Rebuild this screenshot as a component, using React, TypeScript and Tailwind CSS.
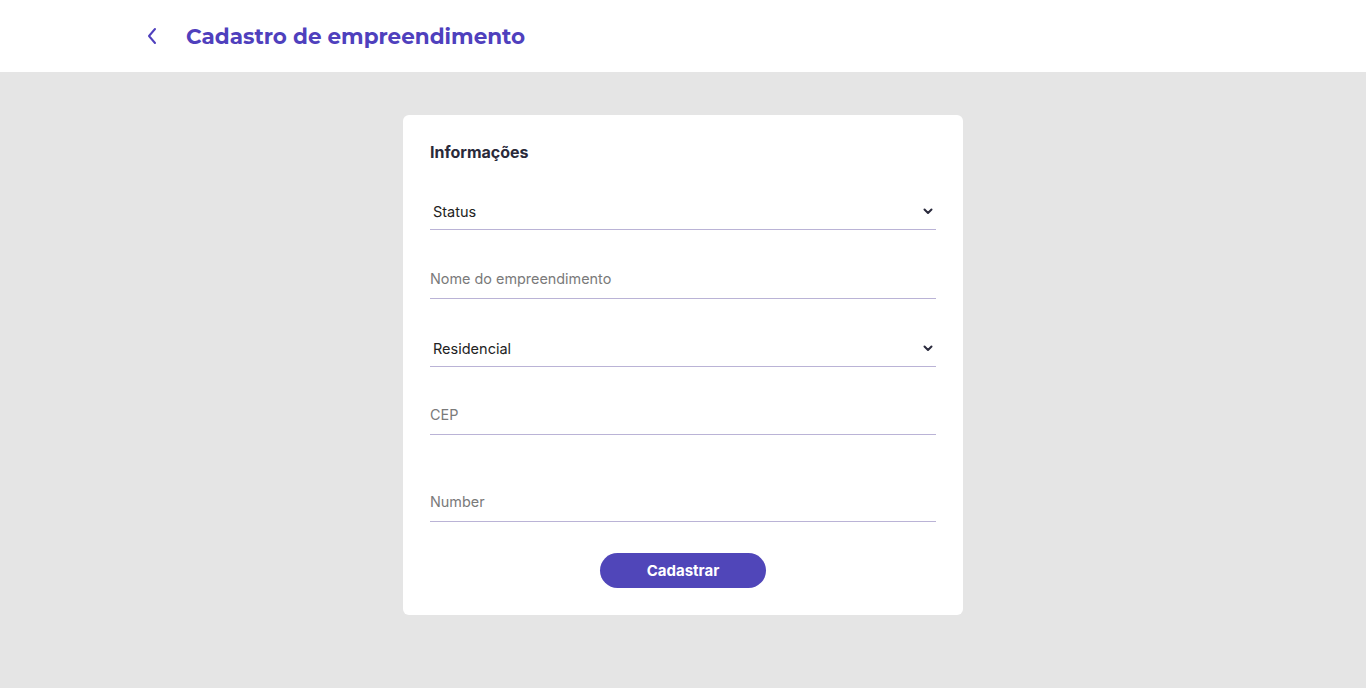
import React from 'react';

const font = { fontFamily: 'Inter, "Noto Sans", sans-serif' };

function Chevron() {
  return (
    <svg width="10" height="7" viewBox="0 0 10 7" className="text-[#2b2b3d]">
      <path d="M1.5 1.5 L5 5 L8.5 1.5" fill="none" stroke="currentColor" strokeWidth="2" strokeLinecap="round" strokeLinejoin="round" />
    </svg>
  );
}

function SelectField({ label }: { label: string }) {
  return (
    <div className="flex h-[37px] items-center justify-between border-b border-[#bab3d6] pt-[1px] pl-[3px] pr-[3px]">
      <span className="text-[14.5px] text-[#222222]">{label}</span>
      <Chevron />
    </div>
  );
}

function InputField({ placeholder }: { placeholder: string }) {
  return (
    <div className="flex h-[37px] items-center border-b border-[#bab3d6] pb-[2px]">
      <input
        placeholder={placeholder}
        className="w-full bg-transparent text-[14.4px] text-[#222222] outline-none placeholder:text-[#7a7a7a]"
        style={font}
      />
    </div>
  );
}

export default function App() {
  return (
    <div className="min-h-screen bg-[#e5e5e5]" style={font}>
      <header className="flex h-[72px] items-center bg-white pl-[146px]">
        <svg width="12" height="18" viewBox="0 0 12 18" className="text-[#4f40bd]">
          <path d="M9 2 L3 9 L9 16" fill="none" stroke="currentColor" strokeWidth="2" strokeLinecap="round" strokeLinejoin="round" />
        </svg>
        <h1 className="ml-[28px] text-[21.5px] font-bold text-[#4f40bd]" style={{ fontFamily: 'Montserrat, Inter, sans-serif' }}>
          Cadastro de empreendimento
        </h1>
      </header>

      <main className="flex justify-center pt-[43px]">
        <div className="w-[560px] rounded-md bg-white px-[27px] pt-[27px] pb-[27px]">
          <h2 className="text-[16px] leading-[20px] font-bold text-[#2a2a3a]">Informações</h2>
          <div className="mt-[31px]">
            <SelectField label="Status" />
          </div>
          <div className="mt-[32px]">
            <InputField placeholder="Nome do empreendimento" />
          </div>
          <div className="mt-[31px]">
            <SelectField label="Residencial" />
          </div>
          <div className="mt-[31px]">
            <InputField placeholder="CEP" />
          </div>
          <div className="mt-[50px]">
            <InputField placeholder="Number" />
          </div>
          <div className="mt-[31px] flex justify-center">
            <button className="h-[35px] w-[166px] rounded-full bg-[#5046b9] pt-[1px] text-[15px] font-bold text-white">
              Cadastrar
            </button>
          </div>
        </div>
      </main>
    </div>
  );
}
